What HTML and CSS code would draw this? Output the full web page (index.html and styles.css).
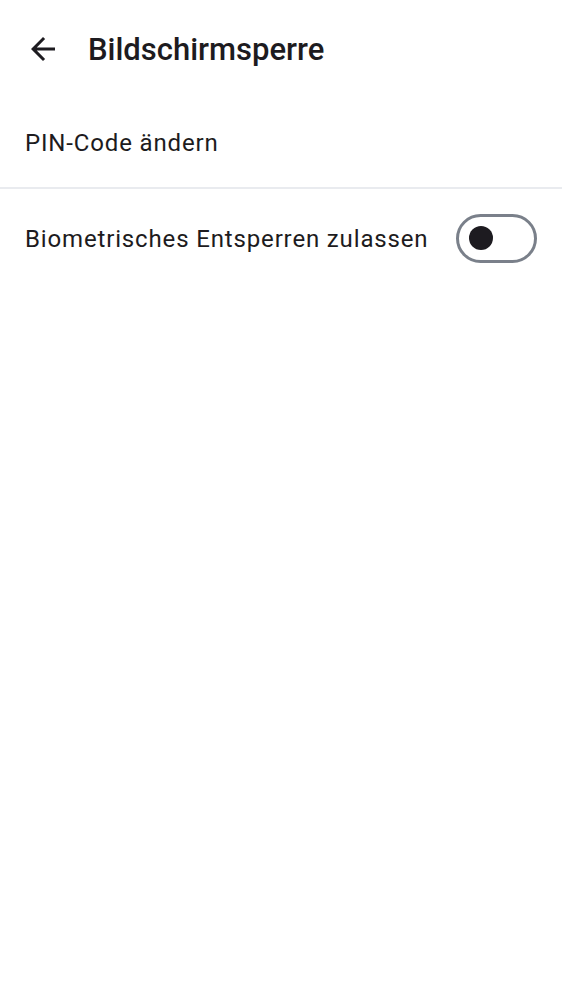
FILE: index.html
```html
<!DOCTYPE html>
<html lang="de">
<head>
<meta charset="utf-8">
<link rel="stylesheet" href="styles.css">
</head>
<body>
<div class="app">
  <header class="topbar">
    <button class="back" aria-label="Zurück">
      <svg width="36" height="36" viewBox="0 0 24 24"><path d="M20 11H7.83l5.59-5.59L12 4l-8 8 8 8 1.41-1.41L7.83 13H20v-2z" fill="#1d1b20"/></svg>
    </button>
    <h1 class="title">Bildschirmsperre</h1>
  </header>
  <div class="row row-first">
    <span class="label">PIN-Code ändern</span>
  </div>
  <div class="divider"></div>
  <div class="row row-switch">
    <span class="label">Biometrisches Entsperren zulassen</span>
    <span class="switch"><span class="thumb"></span></span>
  </div>
</div>
</body>
</html>
```
FILE: styles.css
```css
html, body {
  margin: 0;
  padding: 0;
  background: #ffffff;
}
body {
  font-family: Roboto, "Noto Sans", sans-serif;
  color: #1d1b20;
}
.app {
  display: flex;
  flex-direction: column;
}
.topbar {
  height: 98px;
  display: flex;
  align-items: center;
  padding-left: 25px;
  gap: 27px;
}
.back {
  border: 0;
  background: none;
  padding: 0;
  width: 36px;
  height: 36px;
  display: flex;
}
.title {
  margin: 0;
  font-size: 31px;
  font-weight: 500;
  letter-spacing: 0;
  color: #1d1b20;
}
.row {
  display: flex;
  align-items: center;
  padding: 0 25px;
}
.row-first {
  height: 89px;
}
.label {
  font-size: 24px;
  letter-spacing: 0.85px;
  color: #1d1b20;
}
.divider {
  height: 2px;
  background: #e9ebef;
}
.row-switch {
  height: 100px;
  justify-content: space-between;
  padding-right: 25px;
}
.switch {
  box-sizing: border-box;
  width: 81px;
  height: 49px;
  border: 3px solid #7a808a;
  border-radius: 25px;
  display: flex;
  align-items: center;
  padding-left: 10px;
  margin-top: -2px;
}
.thumb {
  width: 24px;
  height: 24px;
  border-radius: 50%;
  background: #1d1b20;
}
```
